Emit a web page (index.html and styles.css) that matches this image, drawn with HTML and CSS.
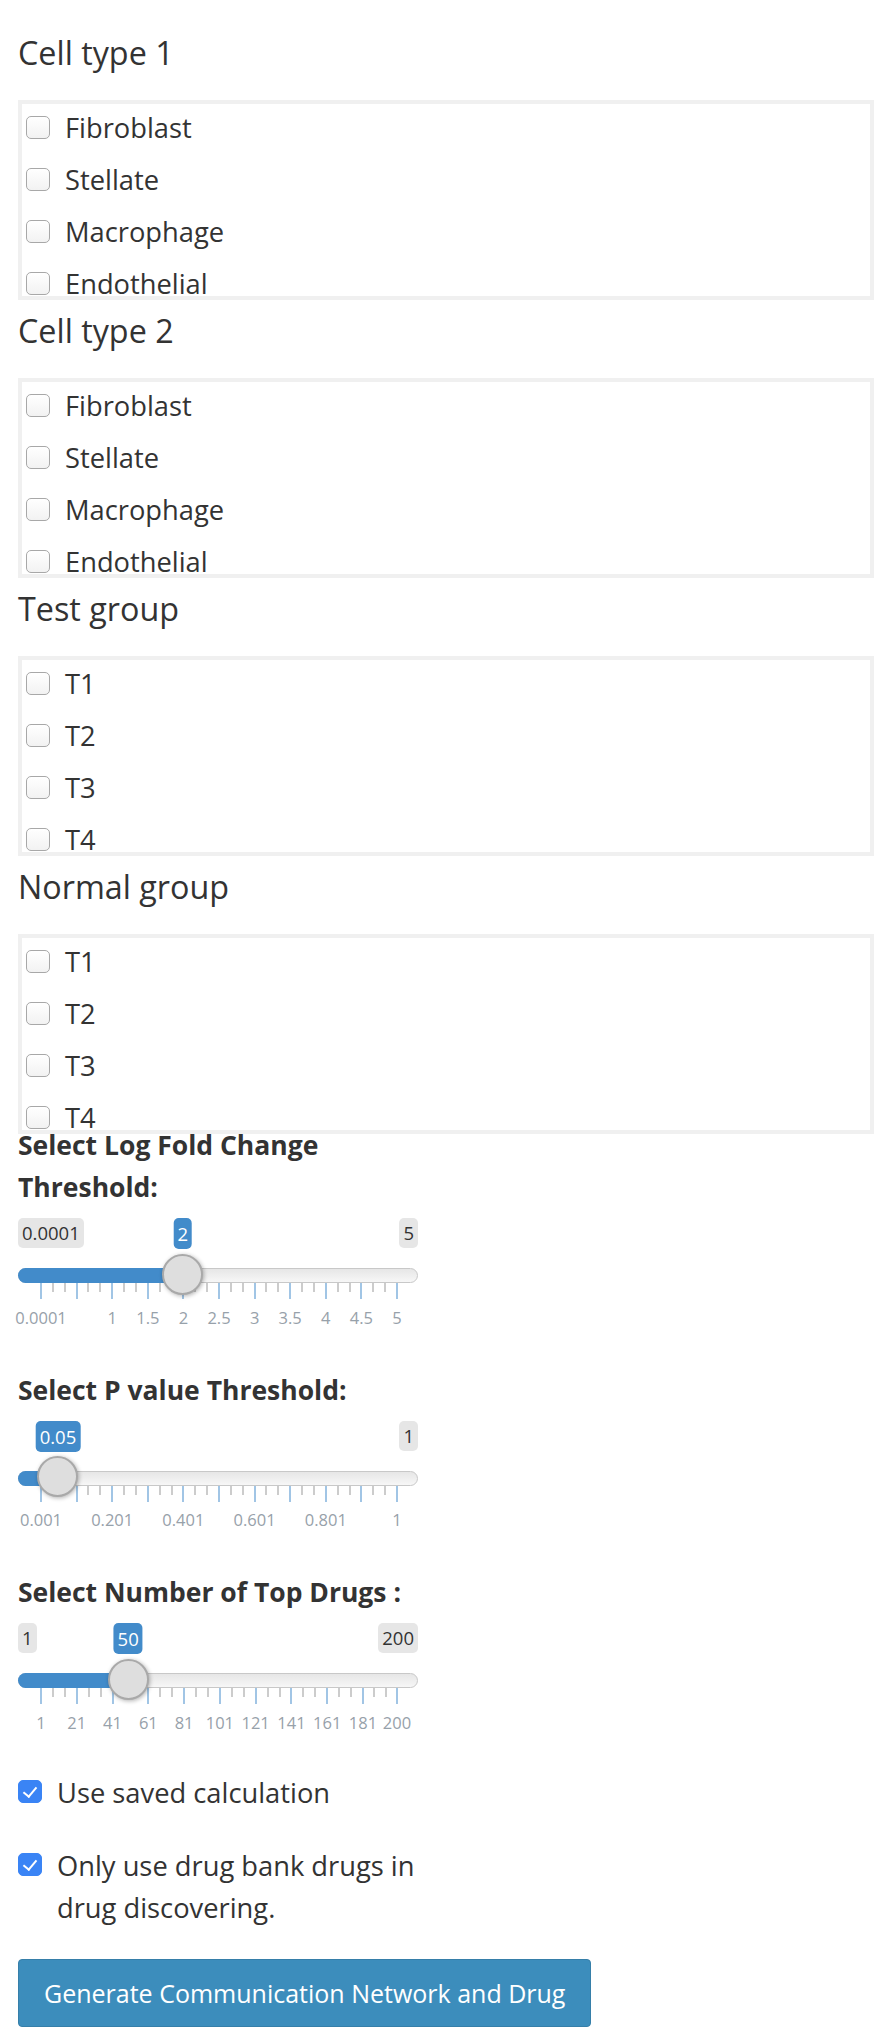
FILE: index.html
```html
<!DOCTYPE html>
<html lang="en">
<head>
<meta charset="utf-8">
<title>Drug discovery inputs</title>
<link rel="stylesheet" href="styles.css">
</head>
<body>
<div class="page">

  <section class="group">
    <h3 class="group-title">Cell type 1</h3>
    <div class="opts">
      <label class="opt"><input type="checkbox" class="cb"><span class="opt-text">Fibroblast</span></label>
      <label class="opt"><input type="checkbox" class="cb"><span class="opt-text">Stellate</span></label>
      <label class="opt"><input type="checkbox" class="cb"><span class="opt-text">Macrophage</span></label>
      <label class="opt"><input type="checkbox" class="cb"><span class="opt-text">Endothelial</span></label>
    </div>
  </section>

  <section class="group">
    <h3 class="group-title">Cell type 2</h3>
    <div class="opts">
      <label class="opt"><input type="checkbox" class="cb"><span class="opt-text">Fibroblast</span></label>
      <label class="opt"><input type="checkbox" class="cb"><span class="opt-text">Stellate</span></label>
      <label class="opt"><input type="checkbox" class="cb"><span class="opt-text">Macrophage</span></label>
      <label class="opt"><input type="checkbox" class="cb"><span class="opt-text">Endothelial</span></label>
    </div>
  </section>

  <section class="group">
    <h3 class="group-title">Test group</h3>
    <div class="opts">
      <label class="opt"><input type="checkbox" class="cb"><span class="opt-text">T1</span></label>
      <label class="opt"><input type="checkbox" class="cb"><span class="opt-text">T2</span></label>
      <label class="opt"><input type="checkbox" class="cb"><span class="opt-text">T3</span></label>
      <label class="opt"><input type="checkbox" class="cb"><span class="opt-text">T4</span></label>
    </div>
  </section>

  <section class="group">
    <h3 class="group-title">Normal group</h3>
    <div class="opts">
      <label class="opt"><input type="checkbox" class="cb"><span class="opt-text">T1</span></label>
      <label class="opt"><input type="checkbox" class="cb"><span class="opt-text">T2</span></label>
      <label class="opt"><input type="checkbox" class="cb"><span class="opt-text">T3</span></label>
      <label class="opt"><input type="checkbox" class="cb"><span class="opt-text">T4</span></label>
    </div>
  </section>

  <div class="controls">

    <div class="control">
      <label class="ctl-label">Select Log Fold Change Threshold:</label>
      <div class="slider" style="--p:0.4">
        <div class="slider-tags">
          <span class="tag">0.0001</span>
          <span class="tag">5</span>
          <span class="tag tag-value">2</span>
        </div>
        <div class="track"><span class="bar"></span><span class="handle"></span></div>
        <div class="grid">
          <i class="tick big" style="--t:0"></i><i class="tick" style="--t:0.0333"></i><i class="tick" style="--t:0.0667"></i>
          <i class="tick big" style="--t:0.1"></i><i class="tick" style="--t:0.1333"></i><i class="tick" style="--t:0.1667"></i>
          <i class="tick big" style="--t:0.2"></i><i class="tick" style="--t:0.2333"></i><i class="tick" style="--t:0.2667"></i>
          <i class="tick big" style="--t:0.3"></i><i class="tick" style="--t:0.3333"></i><i class="tick" style="--t:0.3667"></i>
          <i class="tick big" style="--t:0.4"></i><i class="tick" style="--t:0.4333"></i><i class="tick" style="--t:0.4667"></i>
          <i class="tick big" style="--t:0.5"></i><i class="tick" style="--t:0.5333"></i><i class="tick" style="--t:0.5667"></i>
          <i class="tick big" style="--t:0.6"></i><i class="tick" style="--t:0.6333"></i><i class="tick" style="--t:0.6667"></i>
          <i class="tick big" style="--t:0.7"></i><i class="tick" style="--t:0.7333"></i><i class="tick" style="--t:0.7667"></i>
          <i class="tick big" style="--t:0.8"></i><i class="tick" style="--t:0.8333"></i><i class="tick" style="--t:0.8667"></i>
          <i class="tick big" style="--t:0.9"></i><i class="tick" style="--t:0.9333"></i><i class="tick" style="--t:0.9667"></i>
          <i class="tick big" style="--t:1"></i>
          <span class="tick-label" style="--t:0">0.0001</span>
          <span class="tick-label" style="--t:0.2">1</span>
          <span class="tick-label" style="--t:0.3">1.5</span>
          <span class="tick-label" style="--t:0.4">2</span>
          <span class="tick-label" style="--t:0.5">2.5</span>
          <span class="tick-label" style="--t:0.6">3</span>
          <span class="tick-label" style="--t:0.7">3.5</span>
          <span class="tick-label" style="--t:0.8">4</span>
          <span class="tick-label" style="--t:0.9">4.5</span>
          <span class="tick-label" style="--t:1">5</span>
        </div>
      </div>
    </div>

    <div class="control">
      <label class="ctl-label">Select P value Threshold:</label>
      <div class="slider" style="--p:0.049">
        <div class="slider-tags">
          <span class="tag is-hidden">0.001</span>
          <span class="tag">1</span>
          <span class="tag tag-value">0.05</span>
        </div>
        <div class="track"><span class="bar"></span><span class="handle"></span></div>
        <div class="grid">
          <i class="tick big" style="--t:0"></i><i class="tick" style="--t:0.0333"></i><i class="tick" style="--t:0.0667"></i>
          <i class="tick big" style="--t:0.1"></i><i class="tick" style="--t:0.1333"></i><i class="tick" style="--t:0.1667"></i>
          <i class="tick big" style="--t:0.2"></i><i class="tick" style="--t:0.2333"></i><i class="tick" style="--t:0.2667"></i>
          <i class="tick big" style="--t:0.3"></i><i class="tick" style="--t:0.3333"></i><i class="tick" style="--t:0.3667"></i>
          <i class="tick big" style="--t:0.4"></i><i class="tick" style="--t:0.4333"></i><i class="tick" style="--t:0.4667"></i>
          <i class="tick big" style="--t:0.5"></i><i class="tick" style="--t:0.5333"></i><i class="tick" style="--t:0.5667"></i>
          <i class="tick big" style="--t:0.6"></i><i class="tick" style="--t:0.6333"></i><i class="tick" style="--t:0.6667"></i>
          <i class="tick big" style="--t:0.7"></i><i class="tick" style="--t:0.7333"></i><i class="tick" style="--t:0.7667"></i>
          <i class="tick big" style="--t:0.8"></i><i class="tick" style="--t:0.8333"></i><i class="tick" style="--t:0.8667"></i>
          <i class="tick big" style="--t:0.9"></i><i class="tick" style="--t:0.9333"></i><i class="tick" style="--t:0.9667"></i>
          <i class="tick big" style="--t:1"></i>
          <span class="tick-label" style="--t:0">0.001</span>
          <span class="tick-label" style="--t:0.2">0.201</span>
          <span class="tick-label" style="--t:0.4">0.401</span>
          <span class="tick-label" style="--t:0.6">0.601</span>
          <span class="tick-label" style="--t:0.8">0.801</span>
          <span class="tick-label" style="--t:1">1</span>
        </div>
      </div>
    </div>

    <div class="control">
      <label class="ctl-label">Select Number of Top Drugs :</label>
      <div class="slider" style="--p:0.2462">
        <div class="slider-tags">
          <span class="tag">1</span>
          <span class="tag">200</span>
          <span class="tag tag-value">50</span>
        </div>
        <div class="track"><span class="bar"></span><span class="handle"></span></div>
        <div class="grid">
          <i class="tick big" style="--t:0"></i><i class="tick" style="--t:0.0335"></i><i class="tick" style="--t:0.067"></i>
          <i class="tick big" style="--t:0.1005"></i><i class="tick" style="--t:0.134"></i><i class="tick" style="--t:0.1675"></i>
          <i class="tick big" style="--t:0.201"></i><i class="tick" style="--t:0.2345"></i><i class="tick" style="--t:0.268"></i>
          <i class="tick big" style="--t:0.3015"></i><i class="tick" style="--t:0.335"></i><i class="tick" style="--t:0.3685"></i>
          <i class="tick big" style="--t:0.402"></i><i class="tick" style="--t:0.4355"></i><i class="tick" style="--t:0.469"></i>
          <i class="tick big" style="--t:0.5025"></i><i class="tick" style="--t:0.536"></i><i class="tick" style="--t:0.5695"></i>
          <i class="tick big" style="--t:0.603"></i><i class="tick" style="--t:0.6365"></i><i class="tick" style="--t:0.67"></i>
          <i class="tick big" style="--t:0.7035"></i><i class="tick" style="--t:0.737"></i><i class="tick" style="--t:0.7705"></i>
          <i class="tick big" style="--t:0.804"></i><i class="tick" style="--t:0.8375"></i><i class="tick" style="--t:0.871"></i>
          <i class="tick big" style="--t:0.9045"></i><i class="tick" style="--t:0.9363"></i><i class="tick" style="--t:0.9682"></i>
          <i class="tick big" style="--t:1"></i>
          <span class="tick-label" style="--t:0">1</span>
          <span class="tick-label" style="--t:0.1005">21</span>
          <span class="tick-label" style="--t:0.201">41</span>
          <span class="tick-label" style="--t:0.3015">61</span>
          <span class="tick-label" style="--t:0.402">81</span>
          <span class="tick-label" style="--t:0.5025">101</span>
          <span class="tick-label" style="--t:0.603">121</span>
          <span class="tick-label" style="--t:0.7035">141</span>
          <span class="tick-label" style="--t:0.804">161</span>
          <span class="tick-label" style="--t:0.9045">181</span>
          <span class="tick-label" style="--t:1">200</span>
        </div>
      </div>
    </div>

    <label class="check-row first"><input type="checkbox" class="cb" checked><span class="check-text">Use saved calculation</span></label>
    <label class="check-row"><input type="checkbox" class="cb" checked><span class="check-text">Only use drug bank drugs in drug discovering.</span></label>

  </div>

  <button type="button" class="btn">Generate Communication Network and Drug</button>

</div>
</body>
</html>
```

FILE: styles.css
```css
* {
  box-sizing: border-box;
}

html,
body {
  margin: 0;
  padding: 0;
  background: #ffffff;
}

body {
  font-family: "Open Sans", "Noto Sans", "DejaVu Sans", sans-serif;
  color: #333333;
}

.page {
  padding: 22px 12px 0 18px;
}

/* ---------- checkbox groups ---------- */

.group-title {
  margin: 10px 0 28px;
  font-size: 32.3px;
  line-height: 40px;
  font-weight: 400;
}

.opts {
  height: 200px;
  border: 4px solid #f0f0f0;
  padding: 0 4px;
  overflow: hidden;
}

.opt {
  display: flex;
  align-items: flex-start;
  height: 52px;
}

.opt-text {
  font-size: 27.3px;
  line-height: 48px;
}

.cb {
  -webkit-appearance: none;
  appearance: none;
  position: relative;
  flex: none;
  width: 24px;
  height: 23px;
  margin: 12px 15px 0 0;
  border: 1.5px solid #a8a8a8;
  border-radius: 5px;
  background: linear-gradient(#ffffff, #f2f2f2);
}

.cb:checked {
  background: #3a84f5;
  border-color: #3a84f5;
}

.cb:checked::after {
  content: "";
  position: absolute;
  left: 7px;
  top: 3px;
  width: 6px;
  height: 11px;
  border: solid #ffffff;
  border-width: 0 2.5px 2.5px 0;
  transform: rotate(40deg);
}

/* ---------- sliders ---------- */

.controls {
  width: 400px;
}

.control {
  margin-top: 40.5px;
}

.control:first-child {
  margin-top: -10px;
}

.ctl-label {
  display: block;
  font-weight: 700;
  font-size: 26.5px;
  line-height: 42px;
}

.slider-tags {
  position: relative;
  display: flex;
  justify-content: space-between;
  margin-top: 10px;
  height: 31px;
}

.tag {
  height: 30px;
  line-height: 30px;
  padding: 0 4px;
  border-radius: 5px;
  background: #e6e6e6;
  font-size: 18.5px;
  color: #333333;
}

.tag.is-hidden {
  visibility: hidden;
}

.tag-value {
  position: absolute;
  top: 0;
  height: 31px;
  line-height: 31px;
  left: calc(22.5px + 356px * var(--p));
  transform: translateX(-50%);
  background: #428bca;
  color: #ffffff;
}

.track {
  position: relative;
  z-index: 1;
  margin-top: 19px;
  height: 15px;
  border: 1px solid #c8c8c8;
  border-radius: 8px;
  background: linear-gradient(to bottom, #dedede -50%, #ffffff 150%);
}

.bar {
  position: absolute;
  left: -1px;
  top: -1px;
  bottom: -1px;
  width: calc(22.5px + 356px * var(--p));
  background: #428bca;
  border-radius: 8px 0 0 8px;
}

.handle {
  position: absolute;
  z-index: 2;
  top: -15.5px;
  left: calc(1px + 356px * var(--p));
  width: 41px;
  height: 41px;
  border-radius: 50%;
  background: #dedede;
  border: 2px solid #a9a9a9;
  box-shadow: 1px 1px 4px rgba(0, 0, 0, 0.3);
}

.grid {
  position: relative;
  height: 45px;
}

.tick {
  position: absolute;
  top: 0;
  left: calc(22px + 356px * var(--t));
  width: 2px;
  height: 9px;
  background: #cccccc;
}

.tick.big {
  height: 16px;
  background: #a1c5e5;
}

.tick-label {
  position: absolute;
  top: 24.5px;
  left: calc(23px + 356px * var(--t));
  transform: translateX(-50%);
  font-size: 16.5px;
  line-height: 20px;
  color: #97a1aa;
  white-space: nowrap;
}

/* ---------- checkboxes ---------- */

.check-row {
  display: flex;
  align-items: flex-start;
  width: 420px;
  margin-top: 31px;
}

.check-row.first {
  margin-top: 38.5px;
}

.check-row .cb {
  margin: 8.6px 15px 0 0;
}

.check-text {
  font-size: 27.3px;
  line-height: 42px;
}

/* ---------- button ---------- */

.btn {
  display: inline-block;
  margin-top: 30px;
  height: 68px;
  padding: 0 25px;
  font-family: inherit;
  font-size: 25px;
  line-height: 66px;
  color: #ffffff;
  background: #3c8dbc;
  border: 1px solid #367fa9;
  border-radius: 4px;
}
```
